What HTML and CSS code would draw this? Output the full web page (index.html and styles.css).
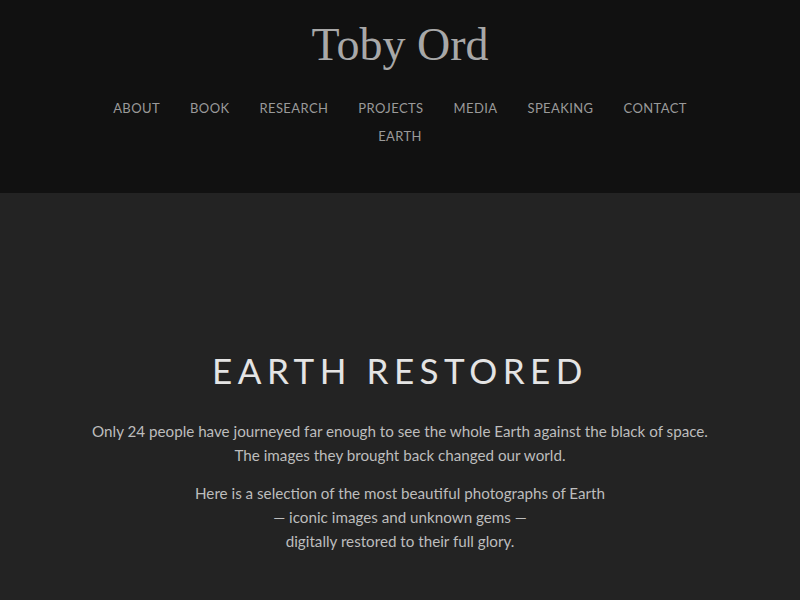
FILE: index.html
```html
<!DOCTYPE html>
<html lang="en">
<head>
<meta charset="utf-8">
<title>Earth Restored — Toby Ord</title>
<link rel="stylesheet" href="styles.css">
</head>
<body>
<header class="site-header">
  <h1 class="site-title">Toby Ord</h1>
  <nav class="site-nav">
    <a href="#">About</a>
    <a href="#">Book</a>
    <a href="#">Research</a>
    <a href="#">Projects</a>
    <a href="#">Media</a>
    <a href="#">Speaking</a>
    <a href="#">Contact</a>
    <a href="#">Earth</a>
  </nav>
</header>
<main class="intro">
  <h2 class="intro-title">Earth Restored</h2>
  <p class="intro-text">Only 24 people have journeyed far enough to see the whole Earth against the black of space.<br>The images they brought back changed our world.</p>
  <p class="intro-text">Here is a selection of the most beautiful photographs of Earth<br>— iconic images and unknown gems —<br>digitally restored to their full glory.</p>
</main>
</body>
</html>
```
FILE: styles.css
```css
html, body {
  margin: 0;
  padding: 0;
  background: #232323;
}
body {
  font-family: Lato, "Open Sans", sans-serif;
}
.site-header {
  background: #111111;
  height: 193px;
  box-sizing: border-box;
  padding-top: 18px;
  text-align: center;
}
.site-title {
  margin: 0;
  font-family: "Liberation Serif", serif;
  font-weight: normal;
  font-size: 46px;
  line-height: 54px;
  color: #a8a8a8;
}
.site-nav {
  margin: 22px auto 0;
  width: 640px;
  display: flex;
  flex-wrap: wrap;
  justify-content: center;
  column-gap: 30px;
}
.site-nav a {
  color: #9a9a9a;
  text-decoration: none;
  text-transform: uppercase;
  font-size: 13px;
  letter-spacing: 0.4px;
  line-height: 28px;
}
.intro {
  padding-top: 153px;
  text-align: center;
}
.intro-title {
  margin: 0 0 25px;
  font-weight: normal;
  font-size: 35px;
  line-height: 48px;
  letter-spacing: 5.5px;
  text-transform: uppercase;
  color: #e4e4e4;
}
.intro-text {
  margin: 0 0 14px;
  font-size: 15.2px;
  line-height: 24px;
  color: #bdbdbd;
}
```
